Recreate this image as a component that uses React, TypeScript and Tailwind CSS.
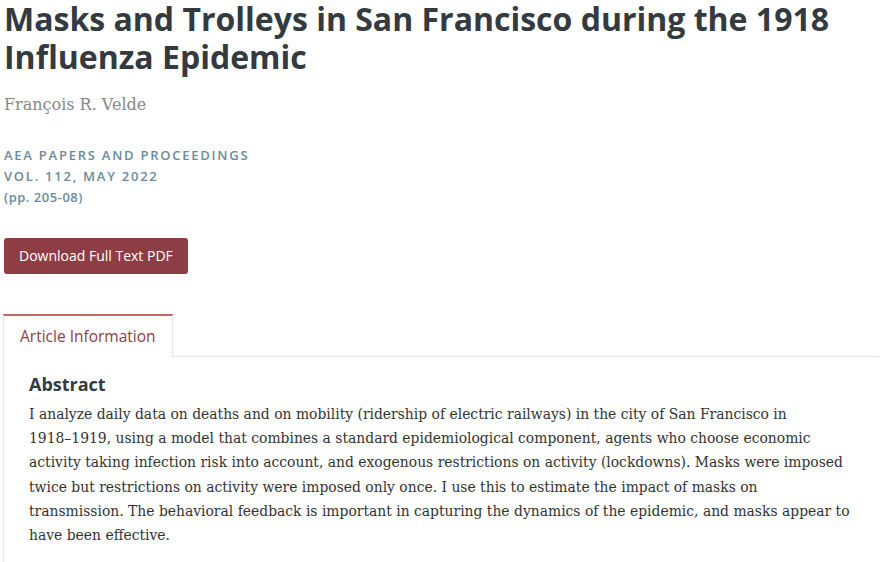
export default function App() {
  return (
    <main className="w-full bg-white px-[4px] pt-0 text-[#333]">
      <h1 className="font-['Open_Sans',sans-serif] text-[32px] font-bold leading-[38px] text-[#333a40]">
        Masks and Trolleys in San Francisco during the 1918 Influenza Epidemic
      </h1>
      <p className="mt-[17px] font-['DejaVu_Serif',serif] text-[16px] leading-[24px] text-[#888]">
        François R. Velde
      </p>

      <div className="mt-[28px] font-['Open_Sans',sans-serif] font-semibold text-[#6c8a9b]">
        <p className="text-[13px] leading-[21px] tracking-[0.135em]">AEA PAPERS AND PROCEEDINGS</p>
        <p className="text-[13px] leading-[21px] tracking-[0.135em]">VOL. 112, MAY 2022</p>
        <p className="text-[13px] leading-[21px] tracking-[0.04em]">(pp. 205-08)</p>
      </div>

      <button className="mt-[30px] rounded-[3px] bg-[#8f3d44] px-[15px] py-[8px] font-['Open_Sans',sans-serif] text-[14px] leading-[20px] text-white">
        Download Full Text PDF
      </button>

      <div className="mt-[40px] -ml-[1px]">
        <div className="flex">
          <div className="border-x border-t-2 border-x-[#e3e3e3] border-t-[#c3665d] px-[16px] pb-[11px] pt-[10px] font-['Open_Sans',sans-serif] text-[15.5px] leading-[20px] text-[#8f3d44]">
            Article Information
          </div>
          <div className="flex-1 border-b border-[#e3e3e3]" />
        </div>
        <div className="border-l border-[#e3e3e3] pb-[24px] pl-[25px] pr-[4px] pt-[15px]">
          <h2 className="font-['Open_Sans',sans-serif] text-[18px] font-bold leading-[24px] text-[#333a40]">Abstract</h2>
          <p className="mt-[6px] whitespace-nowrap font-['DejaVu_Serif',serif] text-[13.9px] leading-[24.2px] text-[#333]">
            I analyze daily data on deaths and on mobility (ridership of electric railways) in the city of San Francisco in
            <br />
            1918–1919, using a model that combines a standard epidemiological component, agents who choose economic
            <br />
            activity taking infection risk into account, and exogenous restrictions on activity (lockdowns). Masks were imposed
            <br />
            twice but restrictions on activity were imposed only once. I use this to estimate the impact of masks on
            <br />
            transmission. The behavioral feedback is important in capturing the dynamics of the epidemic, and masks appear to
            <br />
            have been effective.
          </p>
        </div>
      </div>
    </main>
  );
}
